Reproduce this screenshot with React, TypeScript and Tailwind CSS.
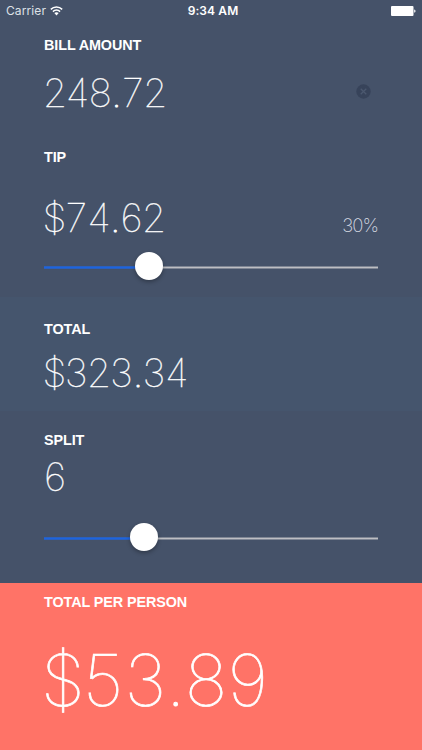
import { ReactNode } from "react"

const HELVETICA = "font-['Liberation_Sans',Arial,sans-serif]"

function StatusBar() {
    return (
        <div className="grid h-[22px] grid-cols-3 items-center px-[6px]">
            <div className="flex items-center gap-[4px]">
                <span className="font-['Inter',sans-serif] text-[12px] tracking-[0.1px] text-[#dde1e7]">Carrier</span>
                <svg width="13" height="10" viewBox="0 0 13 10" fill="none" stroke="#fff" strokeWidth="1.5">
                    <path d="M0.8 3.4C4 0.2 9 0.2 12.2 3.4" />
                    <path d="M2.9 5.6C5 3.6 8 3.6 10.1 5.6" />
                    <path d="M4.3 7.1C5.5 6 7.5 6 8.7 7.1L6.5 9.4Z" fill="#fff" stroke="none" />
                </svg>
            </div>
            <span className="pl-[4px] text-center font-['Inter',sans-serif] text-[12px] font-semibold tracking-[0.1px]">9:34 AM</span>
            <svg className="justify-self-end" width="25" height="10" viewBox="0 0 25 10" fill="#fff">
                <rect x="0" y="0" width="22.5" height="10" rx="1" />
                <path d="M23.2 3.4C24.9 3.6 24.9 6.4 23.2 6.6Z" />
            </svg>
        </div>
    )
}

function Label({ children }: { children: ReactNode }) {
    return <h2 className={`${HELVETICA} text-[14.4px] leading-[18px] font-bold tracking-[-0.1px]`}>{children}</h2>
}

// even digit widths, with a wide decimal point between them
function Digits({ value }: { value: string }) {
    const [whole, cents] = value.split(".")
    return (
        <>
            {whole}
            {cents && <span className="px-[0.025em] [font-variant-numeric:normal] [-webkit-text-stroke:1px_white]">.</span>}
            {cents}
        </>
    )
}

function Amount({ value }: { value: string }) {
    return (
        <p className="-ml-[1.5px] font-['Inter',sans-serif] text-[39px] leading-[48px] font-thin tracking-[-0.065em] tabular-nums [-webkit-text-stroke:0.35px_white]">
            <Digits value={value} />
        </p>
    )
}

function Slider({ value }: { value: number }) {
    return (
        <div className="relative h-7 w-[334px] pt-[14px]">
            <div className="flex h-[3px]">
                <div className="border-y border-[#2b60bd] bg-[#1c64e0]" style={{ width: `${value}px` }} />
                <div className="flex-1 border-y border-[#7f8694] bg-[#bdbec3]" />
            </div>
            <div
                className="absolute top-0 h-7 w-7 rounded-full bg-white shadow-[0_2px_4px_rgba(0,0,0,0.3)]"
                style={{ left: `${value - 14}px` }}
            />
        </div>
    )
}

export default function App() {
    return (
        <main className="flex h-[750px] w-[422px] flex-col overflow-hidden bg-[#455269] text-white">
            <StatusBar />

            <section className="h-[126px] px-[44px] pt-[14px]">
                <Label>BILL AMOUNT</Label>
                <div className="mt-[15px] flex items-center justify-between pr-[7px]">
                    <Amount value="248.72" />
                    <svg className="mb-[4px]" width="15" height="15" viewBox="0 0 15 15">
                        <circle cx="7.5" cy="7.5" r="7.2" fill="#37435a" />
                        <path d="M4.7 4.7L10.3 10.3M10.3 4.7L4.7 10.3" stroke="#4b586f" strokeWidth="1.3" />
                    </svg>
                </div>
            </section>

            <section className="h-[149px] px-[44px]">
                <Label>TIP</Label>
                <div className="mt-[28px] flex items-end justify-between">
                    <Amount value="$74.62" />
                    <span className="pb-[6px] font-['Inter',sans-serif] text-[18.5px] leading-[22px] font-extralight tracking-[-1px] text-[#d5dae2]">30%</span>
                </div>
                <div className="mt-[10px]">
                    <Slider value={105} />
                </div>
            </section>

            <section className="h-[114px] bg-[#45556d] px-[44px] pt-[23px]">
                <Label>TOTAL</Label>
                <div className="mt-[11px]">
                    <Amount value="$323.34" />
                </div>
            </section>

            <section className="h-[172px] px-[44px] pt-[20px]">
                <Label>SPLIT</Label>
                <div className="mt-[4px]">
                    <Amount value="6" />
                </div>
                <div className="mt-[22px]">
                    <Slider value={100} />
                </div>
            </section>

            <section className="flex-1 bg-[#ff7367] px-[44px] pt-[10px]">
                <Label>TOTAL PER PERSON</Label>
                <p className="mt-[26px] -ml-[3px] font-['Inter',sans-serif] text-[71.5px] leading-[86px] font-thin tracking-[-0.059em] tabular-nums [-webkit-text-stroke:0.7px_white]">
                    <Digits value="$53.89" />
                </p>
            </section>
        </main>
    )
}
